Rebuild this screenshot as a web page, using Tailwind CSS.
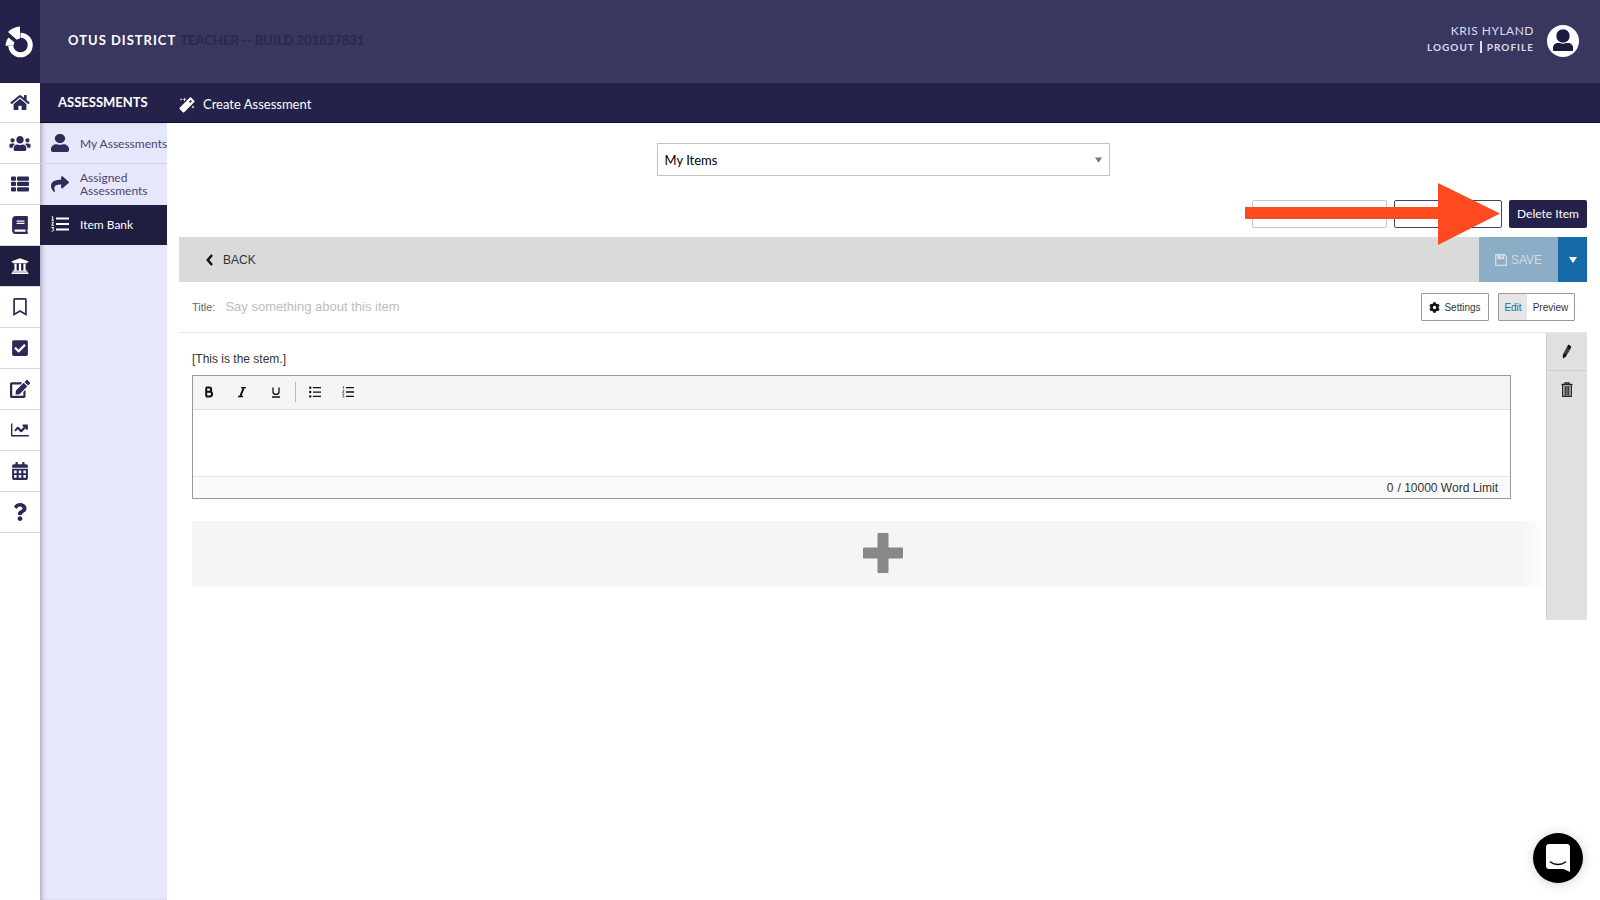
<!DOCTYPE html>
<html lang="en">
<head>
<meta charset="utf-8">
<meta name="viewport" content="width=device-width, initial-scale=1">
<title>Otus – Item Bank</title>
<script src="https://cdn.jsdelivr.net/npm/@tailwindcss/browser@4"></script>
</head>
<body class="flex min-h-screen bg-white font-['Lato',sans-serif] text-[#24224a]">

<!-- Icon rail -->
<nav aria-label="Main" class="relative z-10 flex w-10 shrink-0 flex-col bg-white">
  <a href="#" aria-label="Otus" class="flex h-[83px] items-center justify-center bg-[#24224a]">
    <svg viewBox="0 0 40 40" class="size-10" fill="none">
      <circle cx="20.500" cy="23" r="9.800" stroke="#fff" stroke-width="5"/>
      <path d="M20.500 24V2H0v22z" fill="#24224a"/>
      <path d="M20 4.500V16.500c-1.200.2-2.300.6-3.300 1.200L8 10C11 6.800 15.200 4.800 20 4.500z" fill="#fff"/>
      <path d="M8.500 15.500l6 5c-.6 1-.9 2-1 3.200H5.500c.2-3 1.300-5.900 3-8.200z" fill="#fff"/>
    </svg>
  </a>
  <a href="#" aria-label="Home" class="flex h-10 items-center justify-center border-b border-[#d9d9d9]"><svg viewBox="0 0 576 512" class="h-[17px] w-5" fill="#2b2955"><path d="M280.370 148.260L96 300.110V464a16 16 0 0 0 16 16l112.060-.29a16 16 0 0 0 15.920-16V368a16 16 0 0 1 16-16h64a16 16 0 0 1 16 16v95.640a16 16 0 0 0 16 16.050L464 480a16 16 0 0 0 16-16V300L295.670 148.260a12.190 12.190 0 0 0-15.300 0zM571.600 251.470L488 182.560V44.050a12 12 0 0 0-12-12h-56a12 12 0 0 0-12 12v72.610L318.470 43a48 48 0 0 0-61 0L4.340 251.470a12 12 0 0 0-1.600 16.900l25.500 31A12 12 0 0 0 45.150 301l235.220-193.740a12.190 12.190 0 0 1 15.300 0L530.900 301a12 12 0 0 0 16.900-1.600l25.500-31a12 12 0 0 0-1.700-16.930z"/></svg></a>
  <a href="#" aria-label="Classes" class="flex h-[41px] items-center justify-center border-b border-[#d9d9d9]"><svg viewBox="0 0 640 512" class="h-[17px] w-[22px]" fill="#2b2955"><path d="M96 224c35.300 0 64-28.700 64-64s-28.700-64-64-64-64 28.700-64 64 28.700 64 64 64zm448 0c35.300 0 64-28.700 64-64s-28.700-64-64-64-64 28.700-64 64 28.700 64 64 64zm32 32h-64c-17.600 0-33.500 7.100-45.100 18.600 40.300 22.100 68.900 62 75.100 109.400h66c17.700 0 32-14.300 32-32v-32c0-35.300-28.700-64-64-64zm-256 0c61.900 0 112-50.100 112-112S381.900 32 320 32 208 82.100 208 144s50.100 112 112 112zm76.800 32h-8.300c-20.800 10-43.900 16-68.500 16s-47.600-6-68.500-16h-8.300C179.600 288 128 339.600 128 403.200V432c0 26.500 21.500 48 48 48h288c26.500 0 48-21.500 48-48v-28.800c0-63.600-51.600-115.200-115.200-115.200zm-223.700-13.400C161.500 263.100 145.600 256 128 256H64c-35.300 0-64 28.700-64 64v32c0 17.700 14.300 32 32 32h65.900c6.300-47.400 34.900-87.300 75.200-109.400z"/></svg></a>
  <a href="#" aria-label="Lists" class="flex h-[41px] items-center justify-center border-b border-[#d9d9d9]"><svg viewBox="0 0 18 16" class="h-4 w-[18px]" fill="#2b2955"><rect x="0" y="0.500" width="5" height="4.200" rx="1"/><rect x="6" y="0.500" width="12" height="4.200" rx="1"/><rect x="0" y="5.800" width="5" height="4.200" rx="1"/><rect x="6" y="5.800" width="12" height="4.200" rx="1"/><rect x="0" y="11.200" width="5" height="4.200" rx="1"/><rect x="6" y="11.200" width="12" height="4.200" rx="1"/></svg></a>
  <a href="#" aria-label="Gradebook" class="flex h-[41px] items-center justify-center border-b border-[#d9d9d9]"><svg viewBox="0 0 448 512" class="h-[18px] w-4" fill="#2b2955"><path d="M448 360V24c0-13.300-10.700-24-24-24H96C43 0 0 43 0 96v320c0 53 43 96 96 96h328c13.300 0 24-10.700 24-24v-16c0-7.500-3.500-14.300-8.900-18.700-4.200-15.400-4.200-59.300 0-74.700 5.400-4.300 8.900-11.100 8.900-18.600zM128 134c0-3.300 2.700-6 6-6h212c3.300 0 6 2.700 6 6v20c0 3.300-2.700 6-6 6H134c-3.300 0-6-2.700-6-6v-20zm0 64c0-3.300 2.700-6 6-6h212c3.300 0 6 2.700 6 6v20c0 3.300-2.700 6-6 6H134c-3.300 0-6-2.700-6-6v-20zm253.400 250H96c-17.700 0-32-14.300-32-32 0-17.600 14.400-32 32-32h285.400c-1.900 17.100-1.900 46.900 0 64z"/></svg></a>
  <a href="#" aria-label="Assessments" aria-current="page" class="flex h-[41px] items-center justify-center border-b border-[#d9d9d9] bg-[#1f1d40]"><svg viewBox="0 0 512 512" class="size-[18px]" fill="#fff"><path d="M496 128v16a8 8 0 0 1-8 8h-24v12c0 6.627-5.373 12-12 12H60c-6.627 0-12-5.373-12-12v-12H24a8 8 0 0 1-8-8v-16a8 8 0 0 1 4.941-7.392l232-88a7.996 7.996 0 0 1 6.118 0l232 88A8 8 0 0 1 496 128zm-24 304H40c-13.255 0-24 10.745-24 24v16a8 8 0 0 0 8 8h464a8 8 0 0 0 8-8v-16c0-13.255-10.745-24-24-24zM96 192v192H60c-6.627 0-12 5.373-12 12v20h416v-20c0-6.627-5.373-12-12-12h-36V192h-64v192h-64V192h-64v192h-64V192H96z"/></svg></a>
  <a href="#" aria-label="Bookmarks" class="flex h-[41px] items-center justify-center border-b border-[#d9d9d9]"><svg viewBox="0 0 384 512" class="h-[18px] w-[14px]" fill="#2b2955"><path d="M336 0H48C21.490 0 0 21.490 0 48v464l192-112 192 112V48c0-26.510-21.490-48-48-48zm0 428.430l-144-84-144 84V54a6 6 0 0 1 6-6h276c3.314 0 6 2.683 6 5.996V428.430z"/></svg></a>
  <a href="#" aria-label="Tasks" class="flex h-[41px] items-center justify-center border-b border-[#d9d9d9]"><svg viewBox="0 0 448 512" class="h-[18px] w-4" fill="#2b2955"><path d="M400 480H48c-26.510 0-48-21.490-48-48V80c0-26.510 21.490-48 48-48h352c26.510 0 48 21.490 48 48v352c0 26.510-21.490 48-48 48zm-204.686-98.059l184-184c6.248-6.248 6.248-16.379 0-22.627l-22.627-22.627c-6.248-6.248-16.379-6.249-22.628 0L184 302.745l-70.059-70.059c-6.248-6.248-16.379-6.248-22.628 0l-22.627 22.627c-6.248 6.248-6.248 16.379 0 22.627l104 104c6.249 6.250 16.379 6.250 22.628.001z"/></svg></a>
  <a href="#" aria-label="Edit" class="flex h-[41px] items-center justify-center border-b border-[#d9d9d9]"><svg viewBox="0 0 576 512" class="h-[18px] w-5" fill="#2b2955"><path d="M402.600 83.200l90.200 90.200c3.800 3.800 3.800 10 0 13.800L274.400 405.600l-92.800 10.300c-12.400 1.400-22.900-9.100-21.500-21.500l10.300-92.800L388.800 83.200c3.800-3.800 10-3.800 13.800 0zm162-22.900l-48.800-48.800c-15.200-15.200-39.900-15.200-55.200 0l-35.400 35.400c-3.800 3.800-3.800 10 0 13.800l90.200 90.200c3.800 3.800 10 3.800 13.800 0l35.400-35.400c15.200-15.300 15.200-40 0-55.200zM384 346.200V448H64V128h229.800c3.200 0 6.200-1.300 8.500-3.500l40-40c7.600-7.600 2.200-20.500-8.500-20.500H48C21.500 64 0 85.500 0 112v352c0 26.500 21.500 48 48 48h352c26.500 0 48-21.500 48-48V306.200c0-10.700-12.900-16-20.500-8.500l-40 40c-2.200 2.300-3.500 5.300-3.500 8.500z"/></svg></a>
  <a href="#" aria-label="Analytics" class="flex h-[41px] items-center justify-center border-b border-[#d9d9d9]"><svg viewBox="0 0 512 512" class="size-[18px]" fill="#2b2955"><path d="M496 400H40V80c0-8.840-3-12-12-12h-16C4 68 0 71 0 80v336c0 17.670 10 26 26 26h470c9 0 16-3 16-12v-18c0-9-7-12-16-12zM464 96H345.940c-21.380 0-32.090 25.850-16.970 40.970l32.400 32.400L288 242.750l-73.370-73.370c-12.500-12.500-32.760-12.500-45.250 0l-68.690 88.690c-6.250 6.250-6.250 16.380 0 22.630l14 14c6.250 6.250 16.380 6.250 22.630 0L192 237.250l73.370 73.370c12.500 12.500 32.760 12.500 45.250 0l96-96 32.400 32.400c15.120 15.120 40.970 4.410 40.970-16.970V112c.01-8.840-7.150-16-15.990-16z"/></svg></a>
  <a href="#" aria-label="Calendar" class="flex h-[41px] items-center justify-center border-b border-[#d9d9d9]"><svg viewBox="0 0 448 512" class="h-[18px] w-4" fill="#2b2955"><path d="M400 64h-48V16c0-8.800-7.200-16-16-16h-32c-8.800 0-16 7.200-16 16v48H160V16c0-8.800-7.200-16-16-16h-32c-8.800 0-16 7.200-16 16v48H48C21.500 64 0 85.500 0 112v48h448v-48c0-26.500-21.500-48-48-48zM0 192v272c0 26.500 21.500 48 48 48h352c26.500 0 48-21.500 48-48V192z"/><g fill="#fff"><path d="M56 240h72v80H56zM188 240h72v80h-72zM320 240h72v80h-72zM56 370h72v80H56zM188 370h72v80h-72zM320 370h72v80h-72z"/></g></svg></a>
  <a href="#" aria-label="Help" class="flex h-[41px] items-center justify-center border-b border-[#d9d9d9]"><svg viewBox="0 0 384 512" class="h-[18px] w-[14px]" fill="#2b2955"><path d="M202.021 0C122.202 0 70.503 32.703 29.914 91.026c-7.363 10.580-5.093 25.086 5.178 32.874l43.138 32.709c10.373 7.865 25.132 6.026 33.253-4.148 25.049-31.381 43.630-49.449 82.757-49.449 30.764 0 68.816 19.799 68.816 49.631 0 22.552-18.617 34.134-48.993 51.164-35.423 19.860-82.299 44.576-82.299 106.405V320c0 13.255 10.745 24 24 24h72.471c13.255 0 24-10.745 24-24v-5.773c0-42.860 125.268-44.645 125.268-160.627C377.504 66.256 286.902 0 202.021 0zM192 373.459c-38.196 0-69.271 31.075-69.271 69.271 0 38.195 31.075 69.270 69.271 69.270s69.271-31.075 69.271-69.271-31.075-69.270-69.271-69.270z"/></svg></a>
</nav>

<div class="flex min-w-0 flex-1 flex-col">
  <header class="flex h-[83px] shrink-0 items-center justify-between bg-[#39365f] pr-[21px] pb-[2px] pl-7">
    <p class="flex items-center gap-1 text-[13px] font-bold whitespace-nowrap"><span class="tracking-[1px] text-white">OTUS DISTRICT</span><span class="text-[#2a2850]">TEACHER -- BUILD 201837831</span></p>
    <div class="flex items-center gap-[13px]">
      <div class="pb-1 text-right text-[#dcdbf0]">
        <p class="text-xs leading-4 tracking-[0.5px]">KRIS HYLAND</p>
        <p class="flex items-center justify-end gap-[5px] text-[10px] leading-4 font-bold tracking-[1px]"><a href="#">LOGOUT</a><span class="h-3 w-[2px] bg-[#dcdbf0]"></span><a href="#">PROFILE</a></p>
      </div>
      <svg viewBox="0 0 32 32" class="size-8"><circle cx="16" cy="16" r="16" fill="#fff"/><path d="M6 25v-2c0-3 2-5 5-5h10c3 0 5 2 5 5v2c0 .6-.4 1-1 1H7c-.6 0-1-.4-1-1z" fill="#1c1a3d"/><circle cx="16" cy="11" r="7.200" fill="#1c1a3d" stroke="#fff"/></svg>
    </div>
  </header>

  <div class="flex h-10 shrink-0 items-center border-b border-[#0e0c30] bg-[#24224a] text-white">
    <h1 class="w-[139px] pl-[18px] text-[13px] font-bold">ASSESSMENTS</h1>
    <a href="#" class="flex items-center gap-2 pt-1 text-[13px]">
      <svg viewBox="0 0 16 16" class="size-4" fill="#fff"><path d="M10.800.6c.4-.4.9-.4 1.300 0l3.200 3.200c.4.400.4.900 0 1.300L5.200 15.300c-.4.400-1 .4-1.400 0L.7 12.100c-.4-.4-.4-1 0-1.400z"/><path d="M10 4.800l1.700-1.700 1.200 1.200L11.200 6z" fill="#24224a"/><path d="M5.500.5l.6 1.400 1.400.6-1.400.6-.6 1.400-.6-1.400-1.400-.6 1.400-.6zM2 1l.4.900.9.400-.9.400-.4.900-.4-.9-.9-.4.9-.4zM14 8.500l.5 1.100 1.100.5-1.100.5-.5 1.100-.5-1.100-1.100-.5 1.100-.5z"/></svg>
      Create Assessment
    </a>
  </div>

  <div class="flex flex-1">
    <!-- Section menu -->
    <nav aria-label="Assessments" class="w-[127px] shrink-0 bg-[#e7e7fb] text-xs leading-[13px] text-[#47446f] shadow-[inset_4px_0_4px_-2px_rgba(36,34,74,0.3)]">
      <a href="#" class="flex h-[41px] items-center border-b border-[#d3d3e0] pl-[11px] whitespace-nowrap"><svg viewBox="0 0 448 512" class="mr-[11px] h-[18px] w-[18px] shrink-0" preserveAspectRatio="none" fill="#2f2c57"><path d="M224 256c70.700 0 128-57.300 128-128S294.700 0 224 0 96 57.300 96 128s57.300 128 128 128zm89.600 32h-16.700c-22.200 10.200-46.900 16-72.900 16s-50.600-5.800-72.900-16h-16.700C60.200 288 0 348.200 0 422.400V464c0 26.500 21.500 48 48 48h352c26.500 0 48-21.500 48-48v-41.600c0-74.200-60.200-134.400-134.400-134.400z"/></svg>My Assessments</a>
      <a href="#" class="flex h-[41px] items-center pb-[2px] pl-[11px]"><svg viewBox="0 0 512 512" class="mr-[11px] size-[18px] shrink-0" fill="#2f2c57"><path d="M503.691 189.836L327.687 37.851C312.281 24.546 288 35.347 288 56.015v80.053C127.371 137.907 0 170.100 0 322.326c0 61.441 39.581 122.309 83.333 154.132 13.653 9.931 33.111-2.533 28.077-18.631C66.066 312.814 132.917 274.316 288 272.085V360c0 20.700 24.300 31.453 39.687 18.164l176.004-152c11.071-9.562 11.086-26.753 0-36.328z"/></svg>Assigned Assessments</a>
      <a href="#" aria-current="page" class="flex h-10 items-center bg-[#1f1d40] pb-[2px] pl-[11px] text-white"><svg viewBox="0 0 18 16" class="mr-[11px] h-4 w-[18px] shrink-0" fill="none" stroke="#fff"><path d="M5 2.500h13M5 8h13M5 13.500h13" stroke-width="2"/><path d="M.8.900L1.700.5v3.700M.5 4.200h2.500M.5 6.300h2L.7 9.300h2.300M.5 11.500h2.200L1.600 13c1.800 0 1.600 2.400-1.100 2.100"/></svg>Item Bank</a>
    </nav>

    <main class="min-w-0 flex-1 px-3 pt-5 pr-[13px]">
      <div class="flex justify-center">
        <div class="relative w-[453px]">
          <select aria-label="Item collection" class="h-[33px] w-full appearance-none border border-[#c3c3c3] bg-white px-[7px] pt-[2px] text-[13px] text-black"><option>My Items</option></select>
          <svg viewBox="0 0 8 6" class="pointer-events-none absolute top-[14px] right-2 h-[6px] w-[7px]" fill="#777"><path d="M0 0h8L4 6z"/></svg>
        </div>
      </div>

      <div class="relative mt-6 flex justify-end gap-[7px]">
        <button type="button" aria-label="Add to assessment" disabled class="h-7 w-[135px] rounded-[2px] border border-[#c6c5d2] bg-white"></button>
        <button type="button" aria-label="Share item" class="h-7 w-[108px] rounded-[2px] border border-[#45436a] bg-white"></button>
        <button type="button" class="h-7 w-[78px] rounded-[2px] bg-[#24224a] text-xs whitespace-nowrap text-white">Delete Item</button>
        <svg viewBox="0 0 255 62" class="absolute -top-[17px] right-[87px] h-[62px] w-[255px]" fill="#ff4a1f"><path d="M0 24h193V0l62 30.500L193 62V36H0z"/></svg>
      </div>

      <section class="mt-[9px] font-['Liberation_Sans',Arial,sans-serif] text-[#333]">
        <div class="flex h-[45px] justify-between bg-[#dadada]">
          <button type="button" class="flex items-center gap-[10px] pl-[27px] text-xs"><svg viewBox="0 0 7 12" class="h-3 w-[7px]" fill="none" stroke="#111" stroke-width="2.500"><path d="M6 1L1.800 6 6 11"/></svg>BACK</button>
          <div class="flex">
            <button type="button" disabled class="flex w-[79px] items-center justify-center gap-1 bg-[#8badc5] text-xs text-[#d3dbe0]"><svg viewBox="0 0 12 12" class="size-3" fill="none" stroke="#d8dde0" stroke-width="1.300"><path d="M.7.7h8.800l1.800 1.800v8.800H.7z"/><path d="M3 .7h5.500v3.800H3z" fill="#d8dde0"/><path d="M6.500 1.500v2" stroke="#8badc5"/></svg>SAVE</button>
            <button type="button" aria-label="More save options" class="flex w-[29px] items-center justify-center bg-[#176aa8]"><svg viewBox="0 0 8 6" class="h-[6px] w-2" fill="#fff"><path d="M0 0h8L4 6z"/></svg></button>
          </div>
        </div>

        <div class="flex h-[51px] items-center border-b border-[#e8e8e8] pr-3 pl-[13px]">
          <label for="title" class="text-[11px] text-[#666]">Title:</label>
          <input id="title" type="text" placeholder="Say something about this item" class="ml-[10px] min-w-0 flex-1 text-[13px] outline-none placeholder:text-[#bdbdbd]">
          <button type="button" class="flex h-7 w-[68px] items-center justify-center gap-1 rounded-[1px] border border-[#999] text-[10px]"><svg viewBox="0 0 512 512" class="size-[11px]" fill="#111"><path d="M487.400 315.700l-42.600-24.600c4.300-23.200 4.300-47 0-70.200l42.600-24.600c4.900-2.800 7.100-8.600 5.500-14-11.100-35.600-30-67.800-54.700-94.600-3.800-4.100-10-5.100-14.800-2.300L380.800 110c-17.900-15.400-38.500-27.300-60.800-35.100V25.800c0-5.600-3.900-10.500-9.400-11.700-36.700-8.200-74.300-7.800-109.200 0-5.500 1.200-9.400 6.100-9.400 11.700V75c-22.200 7.900-42.800 19.800-60.800 35.100L88.700 85.500c-4.900-2.800-11-1.900-14.800 2.300-24.700 26.700-43.600 58.900-54.700 94.600-1.700 5.400.6 11.200 5.500 14L67.300 221c-4.300 23.200-4.300 47 0 70.200l-42.600 24.600c-4.900 2.800-7.100 8.600-5.500 14 11.100 35.600 30 67.800 54.700 94.600 3.800 4.100 10 5.100 14.800 2.300l42.600-24.600c17.900 15.400 38.500 27.300 60.800 35.100v49.200c0 5.600 3.900 10.500 9.400 11.700 36.700 8.200 74.300 7.800 109.200 0 5.500-1.200 9.400-6.100 9.400-11.700v-49.200c22.200-7.900 42.800-19.800 60.800-35.100l42.600 24.600c4.900 2.800 11 1.900 14.800-2.300 24.700-26.700 43.600-58.900 54.700-94.600 1.500-5.500-.7-11.300-5.600-14.100zM256 336c-44.100 0-80-35.900-80-80s35.900-80 80-80 80 35.900 80 80-35.900 80-80 80z"/></svg>Settings</button>
          <div class="ml-[9px] flex h-7 rounded-[1px] border border-[#999] text-[10px]">
            <button type="button" aria-pressed="true" class="w-7 bg-[#e6e6e6] text-[#176aa8]">Edit</button>
            <button type="button" class="w-[47px]">Preview</button>
          </div>
        </div>

        <div class="flex">
          <div class="min-w-0 flex-1 pt-5 pl-[13px]">
            <p class="text-xs leading-3">[This is the stem.]</p>
            <div class="mt-[10px] mr-[35px] border border-[#999]">
              <div role="toolbar" aria-label="Formatting" class="flex h-[34px] items-center border-b border-[#ddd] bg-[#f5f5f5] pb-[2px] text-[#111]">
                <button type="button" aria-label="Bold" class="flex w-8 justify-center"><svg viewBox="0 0 12 12" class="size-3" fill="none" stroke="#111" stroke-width="2"><path d="M3.200 1.500v9M3 1.500h3.200c2.700 0 2.700 4.200 0 4.200H3h3.700c3.200 0 3.200 4.800 0 4.800H3"/></svg></button>
                <button type="button" aria-label="Italic" class="flex w-[34px] justify-center"><svg viewBox="0 0 12 12" class="size-3" fill="none" stroke="#111" stroke-width="1.300"><path d="M5 1.600h5M2 10.500h5"/><path d="M7.700 1.600L4.300 10.500" stroke-width="2"/></svg></button>
                <button type="button" aria-label="Underline" class="flex w-[33px] justify-center"><svg viewBox="0 0 12 12" class="size-3" fill="none" stroke="#111" stroke-width="1.300"><path d="M3 1.500v4.200c0 3.600 6 3.600 6 0V1.500M2 11h8"/></svg></button>
                <span class="mx-[3px] h-5 w-px bg-[#bbb]"></span>
                <button type="button" aria-label="Bulleted list" class="flex w-[31px] justify-center"><svg viewBox="0 0 12 12" class="size-3" fill="#111"><path d="M4 1h8v1.300H4zM4 5.400h8v1.300H4zM4 9.800h8v1.300H4z"/><circle cx="1.200" cy="1.700" r="1.200"/><circle cx="1.200" cy="6" r="1.200"/><circle cx="1.200" cy="10.400" r="1.200"/></svg></button>
                <button type="button" aria-label="Numbered list" class="flex w-[35px] justify-center"><svg viewBox="0 0 12 12" class="size-3" fill="none" stroke="#333"><path d="M4 1.700h8M4 6h8M4 10.400h8" stroke="#111" stroke-width="1.300"/><path d="M.8.800l.8-.3v2.700M.5 4.700h1.600L.6 7h1.700M.5 8.700h1.500L1 9.900c1.500 0 1.200 1.600-.5 1.500" stroke-width=".7"/></svg></button>
              </div>
              <textarea aria-label="Response" class="block h-[66px] w-full resize-none bg-white p-2 text-xs outline-none"></textarea>
              <p class="flex h-[22px] items-center justify-end gap-1 border-t border-[#e4e4e4] bg-[#fafafa] pr-3 text-xs"><span>0</span><span>/ 10000 Word Limit</span></p>
            </div>
            <button type="button" aria-label="Add block" class="mt-[22px] flex h-[66px] w-full items-center justify-center bg-linear-to-r from-[#f5f5f5] from-98% to-white pr-1 pb-[2px] pl-8"><svg viewBox="0 0 40 40" class="size-10" fill="#888"><rect x="14.500" width="11" height="40" rx="1"/><rect y="14.500" width="40" height="11" rx="1"/></svg></button>
          </div>
          <div class="flex h-[287px] w-[41px] flex-col border-l border-[#d0d0d0] bg-[#e0e0e0]">
            <button type="button" aria-label="Edit block" class="flex h-[38px] items-center justify-center border-b border-[#cfcfcf]"><svg viewBox="0 0 10 15" class="h-[15px] w-[10px]"><path d="M6.300.6l2.900 1.600-.6 2.600L3.800 12.700.9 14.500.8 11z" fill="#111"/><path d="M6 3.800L2.700 9.700M7.500 4.600L4.200 10.500" stroke="#999" stroke-width=".6"/></svg></button>
            <button type="button" aria-label="Delete block" class="flex h-9 items-center justify-center"><svg viewBox="0 0 12 15" class="h-[15px] w-3" fill="none" stroke="#222" stroke-width="1.300"><path d="M.5 2.500h11M4 2V.8h4V2M1.700 3v11.300h8.600V3M4.200 4v9.500M6 4v9.500M7.800 4v9.500"/></svg></button>
          </div>
        </div>
      </section>
    </main>
  </div>
</div>

<!-- Chat launcher -->
<button type="button" aria-label="Open chat" class="fixed right-[17px] bottom-[17px] flex size-[50px] items-center justify-center rounded-full bg-black shadow-[0_1px_12px_rgba(0,0,0,0.18)]">
  <svg viewBox="0 0 24 28" class="h-7 w-6"><path d="M3 0h18c1.700 0 3 1.300 3 3v25l-6.500-3H3c-1.700 0-3-1.300-3-3V3c0-1.700 1.300-3 3-3z" fill="#fff"/><path d="M4.500 18c4 3.300 11 3.300 15 0" fill="none" stroke="#000" stroke-width="1.400" stroke-linecap="round"/></svg>
</button>
</body>
</html>
